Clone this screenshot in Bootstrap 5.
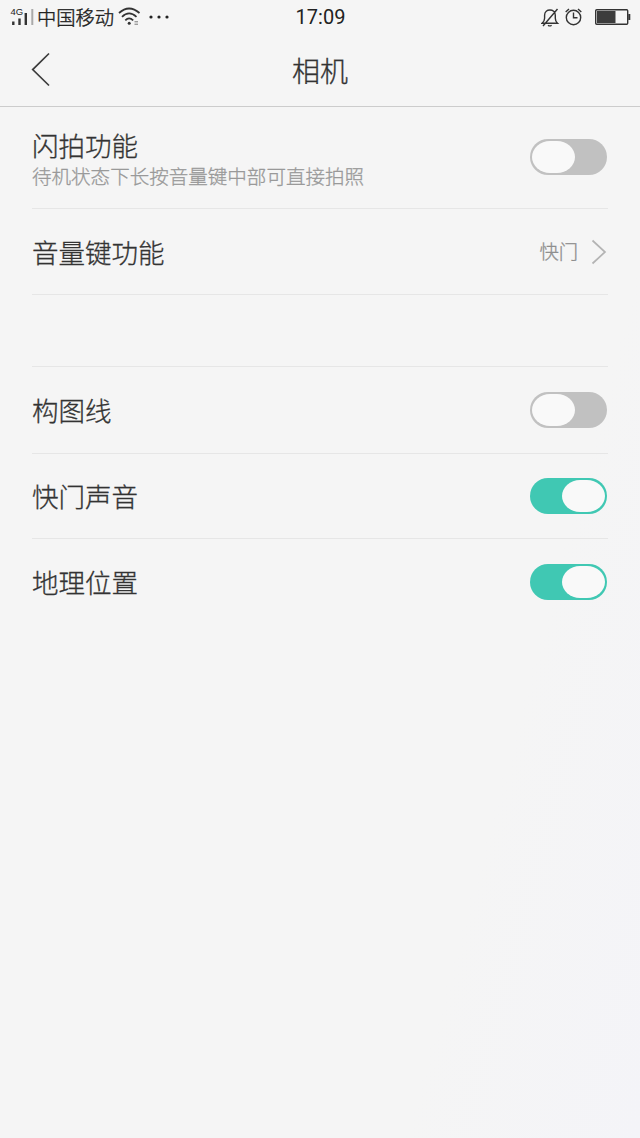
<!DOCTYPE html>
<html lang="zh-CN">
<head>
<meta charset="utf-8">
<meta name="viewport" content="width=device-width, initial-scale=1">
<title>相机</title>
<link href="https://cdn.jsdelivr.net/npm/bootstrap@5.3.0/dist/css/bootstrap.min.css" rel="stylesheet">
<style>
body{background:#f5f5f5 linear-gradient(105deg,#f5f5f5 75%,#f4f4f8 100%);color:#333;font-family:"Noto Sans CJK SC",sans-serif;min-height:1138px;font-weight:300;-webkit-text-stroke:.3px currentColor}
svg{display:block;flex:none;-webkit-text-stroke:0}
.status-bar{height:33px;color:#222;padding:0 9px 0 10px}
.carrier{font-size:19.3px;line-height:30px;margin:0 0 1px 3px;-webkit-text-stroke-width:.4px}
.clock{font-family:Roboto,sans-serif;font-size:20px;line-height:33px;padding-top:1px;font-weight:400;-webkit-text-stroke:0}
.title-bar{height:74px;border-bottom:1px solid #ccc;padding-left:30px;padding-right:30px}
.title-bar h1{font-size:28px;line-height:40px;font-weight:300;margin:0}
.side{width:20px}
.settings{width:576px}
.setting{height:86px;padding:0 1px 1px 0;border-color:#e6e6e6 !important}
.setting.tall{height:102px}
.setting.picker{padding-bottom:0}
.setting.roomy{height:87px}
.setting.snug{height:85px}
.spacer{height:72px;border-color:#e6e6e6 !important}
.label{font-size:26.5px;line-height:38px}
.hint{font-size:19.55px;line-height:24px;color:#999}
.value{font-size:19.3px;color:#8e8e8e;gap:13px}
.toggle{width:77px;height:36px;border-radius:18px;background:#c1c1c1;padding:2px}
.toggle i{display:block;width:43px;height:32px;border-radius:18px/16px;background:#f9f9f9}
.toggle.on{background:#40c8b3;justify-content:flex-end}
</style>
</head>
<body>
<header>
  <div class="status-bar row g-0 align-items-center">
    <div class="col d-flex align-items-center">
      <svg width="24" height="33" viewBox="0 0 24 33"><text x=".5" y="14" font-family="Liberation Sans" font-size="9.5" font-weight="400" fill="#222">4G</text><path d="M3.300 20.500v3.500M9.500 17.500V24M15.800 12V24" stroke="#333" stroke-width="2.400"/><path d="M22.300 8v16" stroke="#aaa" stroke-width="2"/></svg>
      <span class="carrier">中国移动</span>
      <svg class="ms-1" width="54" height="33" viewBox="0 0 54 33" fill="none" stroke="#333" stroke-width="1.8"><path d="M1 12Q11 3 21.500 12M4 15.800Q11 9 18.500 15.800M7.300 19.300Q11 15.500 15.200 19.300"/><circle cx="11.200" cy="22.300" r="1.500" fill="#333" stroke="none"/><path d="M16.500 20.800h3.500M16.500 23.200h3.500" stroke="#777" stroke-width="1"/><g fill="#222" stroke="none"><circle cx="33" cy="16" r="1.600"/><circle cx="41" cy="16" r="1.600"/><circle cx="49" cy="16" r="1.600"/></g></svg>
    </div>
    <div class="col-auto clock">17:09</div>
    <div class="col d-flex justify-content-end align-items-center">
      <svg width="90" height="33" viewBox="541 0 90 33" fill="none" stroke="#333" stroke-width="1.400"><path d="M542 22.300h15.500q-2.200-2-2.200-5v-3c0-7-10.700-7-10.700 0v3q0 3-2.600 5zM548 24.200q1.800 1.400 3.600 0M557.500 8L543 25"/><circle cx="573.500" cy="16.500" r="7.200"/><path d="M573.500 11.500v5.200h4M565.700 11l3.300-3M581.300 11L578 8"/><rect x="595.700" y="8.700" width="32" height="14.600" rx="1"/><path d="M597 10h18.500v12H597z" fill="#3c3c3c" stroke="none"/><path d="M629.300 13v6" stroke-width="2"/></svg>
    </div>
  </div>
  <div class="title-bar d-flex justify-content-between align-items-center">
    <svg class="side" height="36" viewBox="30 52 20 36" fill="none" stroke="#3c3c3c" stroke-width="1.700"><path d="M49 53.500L32.700 69.600 49 85.500"/></svg>
    <h1>相机</h1>
    <span class="side"></span>
  </div>
</header>
<main class="settings mx-auto">
  <div class="setting tall border-bottom d-flex align-items-center justify-content-between">
    <div><div class="label">闪拍功能</div><div class="hint">待机状态下长按音量键中部可直接拍照</div></div>
    <div class="toggle d-flex"><i></i></div>
  </div>
  <div class="setting picker border-bottom d-flex align-items-center justify-content-between">
    <span class="label">音量键功能</span>
    <div class="value d-flex align-items-center">快门<svg width="16" height="26" viewBox="0 0 16 26" fill="none" stroke="#b4b4b4" stroke-width="1.700"><path d="M1.500 1.500L14 13 1.500 24.500"/></svg></div>
  </div>
  <div class="spacer border-bottom"></div>
  <div class="setting roomy border-bottom d-flex align-items-center justify-content-between"><span class="label">构图线</span><div class="toggle d-flex"><i></i></div></div>
  <div class="setting snug border-bottom d-flex align-items-center justify-content-between"><span class="label">快门声音</span><div class="toggle on d-flex"><i></i></div></div>
  <div class="setting d-flex align-items-center justify-content-between"><span class="label">地理位置</span><div class="toggle on d-flex"><i></i></div></div>
</main>
<script src="https://cdn.jsdelivr.net/npm/bootstrap@5.3.0/dist/js/bootstrap.bundle.min.js"></script>
</body>
</html>
